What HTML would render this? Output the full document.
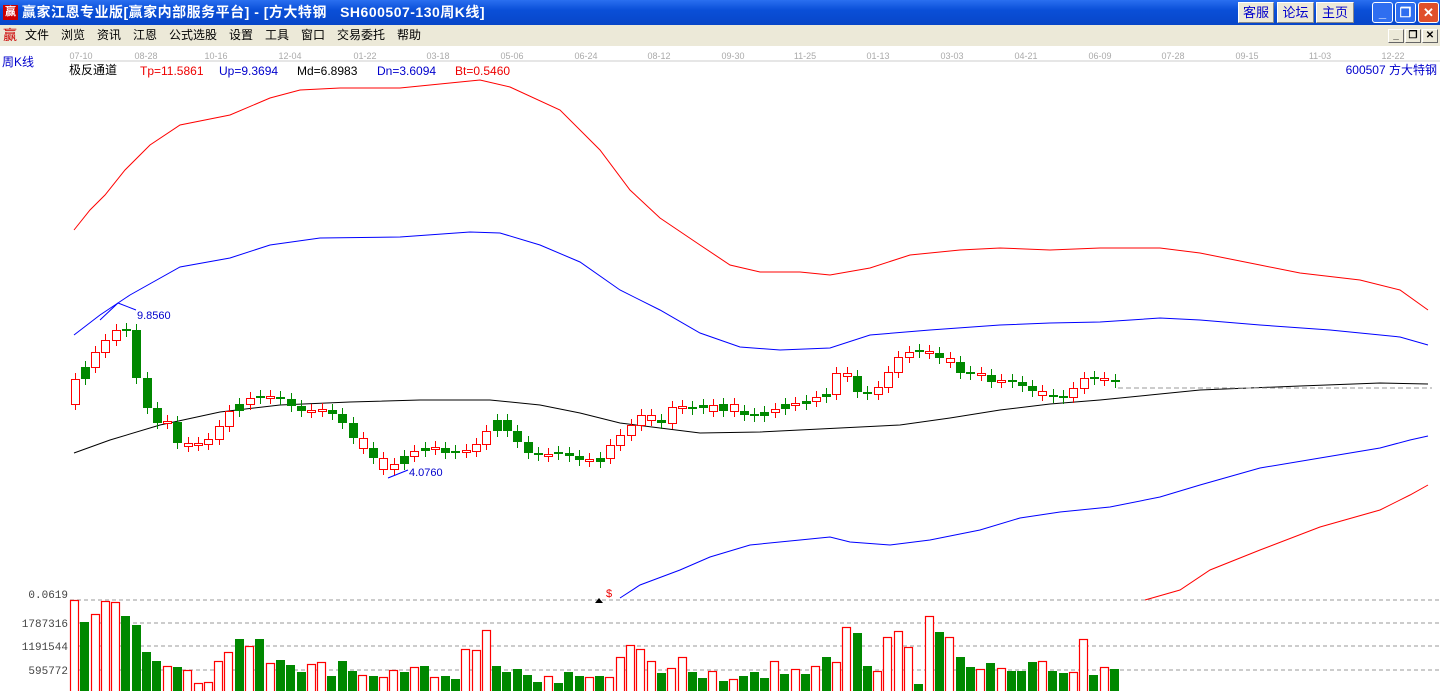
<!DOCTYPE html><html><head><meta charset="utf-8"><style>
*{margin:0;padding:0;box-sizing:border-box}
body{width:1440px;height:691px;overflow:hidden;background:#fff;font-family:"Liberation Sans","Noto Sans CJK SC",sans-serif;position:relative}
.tb{position:absolute;left:0;top:0;width:1440px;height:25px;background:linear-gradient(#2a6ff0,#0a4fd8 40%,#0846c8);color:#fff;font-weight:bold;font-size:14px;line-height:25px}
.tb .t{position:absolute;left:22px;top:0;letter-spacing:0.5px}
.ic{position:absolute;left:3px;top:5px;width:15px;height:15px;background:#c00;color:#fff;font-size:11px;line-height:15px;text-align:center}
.bt{position:absolute;top:2px;height:21px;background:#ece9d8;border:1px solid #fff;border-right-color:#888;border-bottom-color:#888;color:#00c;font-size:13px;line-height:19px;text-align:center;font-weight:normal}
.wb{position:absolute;top:2px;width:21px;height:21px;border:1px solid #fff;border-radius:3px;background:#2f6ef0;color:#fff;text-align:center;line-height:19px;font-size:13px}
.mb{position:absolute;left:0;top:25px;width:1440px;height:21px;background:#ece9d8;font-size:12px;line-height:21px}
.mb span{position:absolute;top:0}
.sb{position:absolute;top:4px;width:16px;height:14px;background:#ece9d8;border:1px solid #fff;border-right-color:#666;border-bottom-color:#666;font-size:10px;line-height:12px;text-align:center;font-weight:bold}
svg{position:absolute;left:0;top:0}
</style></head><body>
<div class="tb"><div class="ic">赢</div><div class="t">赢家江恩专业版[赢家内部服务平台] - [方大特钢 &nbsp; SH600507-130周K线]</div>
<div class="bt" style="left:1238px;width:36px">客服</div><div class="bt" style="left:1277px;width:37px">论坛</div><div class="bt" style="left:1316px;width:38px">主页</div>
<div class="wb" style="left:1372px">_</div><div class="wb" style="left:1395px">❐</div><div class="wb" style="left:1418px;background:#e0502c">✕</div></div>
<div class="mb"><span style="left:3px;color:#c00;font-size:14px">赢</span><span style="left:25px">文件</span><span style="left:61px">浏览</span><span style="left:97px">资讯</span><span style="left:133px">江恩</span><span style="left:169px">公式选股</span><span style="left:229px">设置</span><span style="left:265px">工具</span><span style="left:301px">窗口</span><span style="left:337px">交易委托</span><span style="left:397px">帮助</span>
<div class="sb" style="left:1388px">_</div><div class="sb" style="left:1405px">❐</div><div class="sb" style="left:1422px">✕</div></div>
<svg id="s" width="1440" height="691" xmlns="http://www.w3.org/2000/svg" font-family="Liberation Sans, Noto Sans CJK SC, sans-serif">
<line x1="70" y1="61" x2="1440" y2="61" stroke="#ccc"/>
<g font-size="9" fill="#aaa" text-anchor="middle"><text x="81" y="59">07-10</text><text x="146" y="59">08-28</text><text x="216" y="59">10-16</text><text x="290" y="59">12-04</text><text x="365" y="59">01-22</text><text x="438" y="59">03-18</text><text x="512" y="59">05-06</text><text x="586" y="59">06-24</text><text x="659" y="59">08-12</text><text x="733" y="59">09-30</text><text x="805" y="59">11-25</text><text x="878" y="59">01-13</text><text x="952" y="59">03-03</text><text x="1026" y="59">04-21</text><text x="1100" y="59">06-09</text><text x="1173" y="59">07-28</text><text x="1247" y="59">09-15</text><text x="1320" y="59">11-03</text><text x="1393" y="59">12-22</text></g>
<text x="2" y="66" font-size="12" fill="#00c">周K线</text>
<g font-size="12"><text x="69" y="74" fill="#000">极反通道</text><text x="140" y="75" fill="#e00">Tp=11.5861</text><text x="219" y="75" fill="#00c">Up=9.3694</text><text x="297" y="75">Md=6.8983</text><text x="377" y="75" fill="#00c">Dn=3.6094</text><text x="455" y="75" fill="#e00">Bt=0.5460</text></g>
<text x="1437" y="74" font-size="12" fill="#00c" text-anchor="end">600507 方大特钢</text>
<g fill="none" stroke-width="1">
<polyline stroke="#f00" points="74,230 90,210 105,195 125,170 150,145 180,125 230,115 270,98 300,90 340,88 400,88 450,83 480,80 510,87 560,110 600,150 630,190 660,218 700,245 730,265 760,272 800,272 830,275 870,268 910,255 960,250 1000,248 1050,250 1100,248 1160,248 1200,253 1260,265 1300,273 1360,280 1400,290 1428,310"/>
<polyline stroke="#00f" points="74,335 100,315 130,295 180,267 230,258 270,245 320,238 400,237 470,232 500,233 540,245 580,262 620,290 660,310 700,333 740,347 780,350 830,348 870,335 930,330 1000,325 1050,323 1100,322 1160,318 1200,320 1260,325 1330,330 1400,337 1428,345"/>
<polyline stroke="#000" points="74,453 110,440 160,425 220,412 280,405 350,402 420,400 490,400 540,405 580,413 620,423 660,428 700,433 760,432 840,428 900,425 950,418 1000,410 1050,404 1100,400 1150,395 1200,390 1300,386 1380,383 1428,384"/>
<polyline stroke="#00f" points="620,598 640,585 680,570 710,557 750,545 800,540 830,537 850,542 890,545 930,540 980,530 1020,518 1060,512 1110,507 1160,497 1200,485 1260,468 1320,458 1380,448 1410,440 1428,436"/>
<polyline stroke="#f00" points="1145,600 1180,590 1210,570 1260,550 1320,527 1380,510 1410,495 1428,485"/>
<line x1="1118" y1="388" x2="1432" y2="388" stroke="#999" stroke-dasharray="5,3"/>
<g stroke="#999" stroke-dasharray="4,3"><line x1="70" y1="600" x2="1440" y2="600"/><line x1="70" y1="623" x2="1440" y2="623"/><line x1="70" y1="646" x2="1440" y2="646"/><line x1="70" y1="670" x2="1440" y2="670"/></g>
<polyline stroke="#00f" points="100,320 118,303 136,310"/><polyline stroke="#00f" points="388,478 408,470"/>
</g>
<text x="137" y="319" font-size="11" fill="#00c">9.8560</text><text x="409" y="476" font-size="11" fill="#00c">4.0760</text>
<g font-family="Liberation Mono, monospace" font-size="11" fill="#444" text-anchor="end"><text x="68" y="598">0.0619</text><text x="68" y="627">1787316</text><text x="68" y="650">1191544</text><text x="68" y="674">595772</text></g>
<text x="606" y="597" font-size="11" fill="#e00">$</text><polygon points="595,603 599,598 603,603" fill="#000"/>
<g id="c"></g>
</svg>
<script>
var cl=[380,367,352,340,330,330,382,411,425,422,447,446,444,438,422,408,403,396,398,398,400,410,412,410,410,418,428,448,448,470,468,458,452,450,445,453,452,452,448,435,418,428,440,452,455,455,453,456,460,462,458,445,435,425,415,420,423,405,408,408,404,413,402,413,415,417,410,408,402,405,398,397,392,360,388,395,393,382,362,352,352,350,358,357,372,374,372,383,381,381,385,390,394,397,398,390,378,379,381,382];
var vs="R600 G622 R614 R601 R602 G616 G625 G652 G661 R666 G667 R670 R683 R682 R661 R652 G639 R646 G639 R663 G660 G665 G672 R664 R662 G676 G661 G671 R675 G676 R677 R670 G672 R667 G666 R677 G676 G679 R649 R650 R630 G666 G672 G669 G675 G682 R676 G683 G672 G676 R677 G676 R677 R657 R645 R649 R661 G673 R668 R657 G672 G678 R671 G681 R679 G676 G672 G678 R661 G674 R669 G674 R666 G657 R662 R627 G633 G666 R671 R637 R631 R647 G684 R616 G632 R637 G657 G667 R669 G663 R668 G671 G671 G662 R661 G671 G673 R672 R639 G675 R667 G669".split(' ');
function cy(x){var f=(x-74)/10.505,i=Math.floor(f);if(i<0)return cl[0];if(i>=cl.length-1)return cl[cl.length-1];var r=f-i;return cl[i]*(1-r)+cl[i+1]*r;}
var h='',n=vs.length,dx=(1110-70)/(n-1);
for(var j=0;j<n;j++){var vx=70+j*dx,x=vx+4.5,up=vs[j][0]=='R',v=+vs[j].slice(1);
var c=cy(x),o=j?cy(x-dx):c+25;var t=Math.min(o,c),b=Math.max(o,c);if(b-t<2){t-=1;b=t+2;}
t=Math.round(t);b=Math.round(b);var col=up?'#f00':'#080',xx=Math.round(x)+.5;
h+='<line x1="'+xx+'" y1="'+(t-6)+'" x2="'+xx+'" y2="'+(b+6)+'" stroke="'+col+'"/>';
h+=up?'<rect x="'+(xx-4)+'" y="'+(t+.5)+'" width="8" height="'+(b-t)+'" fill="#fff" stroke="#f00"/>':'<rect x="'+(xx-4.5)+'" y="'+t+'" width="9" height="'+(b-t)+'" fill="#080"/>';
var bx=Math.round(vx);
h+=up?'<rect x="'+(bx+.5)+'" y="'+(v+.5)+'" width="8" height="'+(692-v)+'" fill="#fff" stroke="#f00" stroke-width="1.2"/>':'<rect x="'+bx+'" y="'+v+'" width="9" height="'+(692-v)+'" fill="#080"/>';}
document.getElementById('c').innerHTML=h;
</script>
</body></html>
